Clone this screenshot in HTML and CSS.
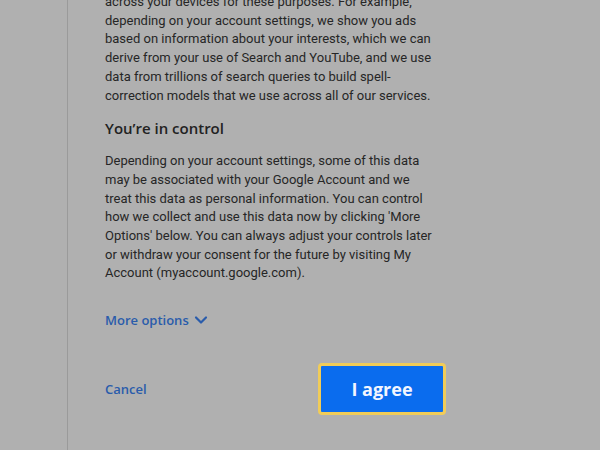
FILE: index.html
```html
<!DOCTYPE html>
<html>
<head>
<meta charset="utf-8">
<link rel="stylesheet" href="styles.css">
</head>
<body>
<div class="page">
  <div class="panel">
    <p class="para first">across your devices for these purposes. For example,<br>depending on your account settings, we show you ads<br>based on information about your interests, which we can<br>derive from your use of Search and YouTube, and we use<br>data from trillions of search queries to build spell-<br>correction models that we use across all of our services.</p>
    <h2 class="heading">You’re in control</h2>
    <p class="para">Depending on your account settings, some of this data<br>may be associated with your Google Account and we<br>treat this data as personal information. You can control<br>how we collect and use this data now by clicking 'More<br>Options' below. You can always adjust your controls later<br>or withdraw your consent for the future by visiting My<br>Account (myaccount.google.com).</p>
    <div class="more">More options
      <svg class="chev" width="14" height="10" viewBox="0 0 14 10"><path d="M2 2.5 L7 7.5 L12 2.5" fill="none" stroke="#2a5cab" stroke-width="2.2" stroke-linecap="round" stroke-linejoin="round"/></svg>
    </div>
    <div class="actions">
      <span class="cancel">Cancel</span>
      <button class="agree">I agree</button>
    </div>
  </div>
</div>
</body>
</html>
```
FILE: styles.css
```css
html, body {
  margin: 0;
  padding: 0;
  background: #b0b0b0;
  height: 100%;
  overflow: hidden;
}
.page {
  padding-left: 67px;
  height: 450px;
}
.panel {
  border-left: 1px solid #9a9a9a;
  height: 450px;
  box-sizing: border-box;
  padding-left: 37px;
  width: 380px;
  font-family: Roboto, "Liberation Sans", sans-serif;
  color: #262626;
  display: flow-root;
}
.para {
  margin: 0;
  font-size: 13px;
  line-height: 18.7px;
  white-space: nowrap;
}
.first {
  margin-top: -7px;
}
.heading {
  margin: 13px 0 14px;
  font-family: "Open Sans", Roboto, sans-serif;
  font-weight: 600;
  font-size: 15px;
  line-height: 20px;
  color: #222;
}
.more {
  margin-top: 28px;
  display: flex;
  align-items: center;
  gap: 5px;
  font-family: "Open Sans", Roboto, sans-serif;
  font-weight: 600;
  font-size: 13px;
  color: #2a5cab;
}
.actions {
  margin-top: 34px;
  display: flex;
  align-items: center;
  justify-content: space-between;
  width: 341px;
}
.cancel {
  font-family: "Open Sans", Roboto, sans-serif;
  font-weight: 600;
  font-size: 13px;
  color: #2a5cab;
}
.agree {
  width: 128px;
  height: 52px;
  box-sizing: border-box;
  border: 3px solid #f1cc58;
  border-radius: 4px;
  background: #0a6cee;
  color: #f2f6ff;
  font-family: "Open Sans", Roboto, sans-serif;
  font-weight: 700;
  font-size: 18px;
  padding: 0;
}
```
